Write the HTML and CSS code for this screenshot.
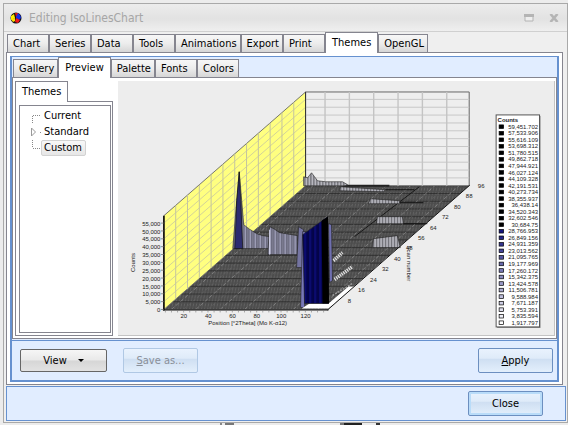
FILE: index.html
```html
<!DOCTYPE html>
<html lang="en">
<head>
    <meta charset="UTF-8">
    <meta name="viewport" content="width=device-width, initial-scale=1.0">
    <title>Editing IsoLinesChart</title>
    <link rel="stylesheet" href="styles.css">
</head>
<body>
    <div class="window">
        <header class="titlebar">
            <svg class="logo" width="12" height="12" viewBox="0 0 12 12">
                <circle cx="6" cy="6" r="5.5" fill="#111"/>
                <path d="M6 6V1A5 5 0 0 1 11 6L9 8Z" fill="#1230e8"/>
                <path d="M5 6L1 8V4L4 2Z" fill="#ffee00"/>
                <path d="M5 6L1 7L3 10L5 9Z" fill="#ffe000"/>
                <path d="M6 6L10 8L8 11L5 10Z" fill="#f01818"/>
                <path d="M5 1L8 1L6 5Z" fill="#e01010"/>
            </svg>
            <h1>Editing IsoLinesChart</h1>
            <button class="win-btn" aria-label="Maximize">
                <svg width="10" height="8" viewBox="0 0 10 8"><path d="M1 1H9V7H1Z" fill="#eee" stroke="#b4b4b4"/><path d="M0 1.5H10" stroke="#b4b4b4" stroke-width="3"/></svg>
            </button>
            <button class="win-btn" aria-label="Close window">
                <svg width="10" height="8" viewBox="0 0 10 8"><path d="M1.5 0L8.5 8M8.5 0L1.5 8" stroke="#b4b4b4" stroke-width="2.6"/></svg>
            </button>
        </header>

        <div class="content">
            <!-- Main tabs -->
            <nav class="tabs">
                <button class="tab">Chart</button>
                <button class="tab">Series</button>
                <button class="tab">Data</button>
                <button class="tab">Tools</button>
                <button class="tab">Animations</button>
                <button class="tab">Export</button>
                <button class="tab">Print</button>
                <button class="tab active">Themes</button>
                <button class="tab">OpenGL</button>
            </nav>

            <div class="page">
                <div class="pane">
                    <!-- Theme tabs -->
                    <nav class="tabs sub">
                        <button class="tab">Gallery</button>
                        <button class="tab active">Preview</button>
                        <button class="tab">Palette</button>
                        <button class="tab">Fonts</button>
                        <button class="tab">Colors</button>
                    </nav>

                    <div class="preview">
                        <div class="sidebar">
                            <nav class="tabs side"><button class="tab active">Themes</button></nav>
                            <div class="side-page">
                                <ul class="tree">
                                    <li><svg width="10" height="16" viewBox="0 0 10 16"><path class="dots" d="M1.500 15V8M2 7.500H10"/></svg><span>Current</span></li>
                                    <li><svg width="10" height="16" viewBox="0 0 10 16"><path d="M.5 4V12L4.500 8Z" fill="#fff" stroke="#999"/><path class="dots" d="M9 8.500H10"/></svg><span>Standard</span></li>
                                    <li><svg width="10" height="16" viewBox="0 0 10 16"><path class="dots" d="M1.500 0V8M2 8.500H10"/></svg><span class="selected">Custom</span></li>
                                </ul>
                            </div>
                        </div>
                        <div class="chart">
                            <svg id="chart" viewBox="118 81 437 255"></svg>
                        </div>
                    </div>

                    <div class="actions">
                        <button class="btn view">View <i class="arrow"></i></button>
                        <button class="btn save" disabled><span><u>S</u>ave as...</span></button>
                        <button class="btn apply"><span><u>A</u>pply</span></button>
                    </div>
                </div>
            </div>

            <footer class="bottom">
                <button class="btn close">Close</button>
            </footer>
        </div>
    </div>
    <div class="behind"></div>
    <script src="chart.js"></script>
</body>
</html>
```
FILE: styles.css
```css
* {
    box-sizing: border-box;
}
body {
    margin: 0;
    padding: 3px 0 0 3px;
    background-color: #ececec;
    font-family: "DejaVu Sans Condensed", "DejaVu Sans", sans-serif;
    font-size: 11px;
    line-height: 16px;
    color: #000;
    overflow: hidden;
}
button {
    font: inherit;
    color: inherit;
    margin: 0;
}
.window {
    border: 1px solid #a9a9a9;
    background-color: #efefef;
}
.titlebar {
    display: flex;
    align-items: center;
    height: 28px;
    padding: 0 8px 0 6px;
    background: linear-gradient(#ececec, #e2e2e2 55%, #efefef);
    border-bottom: 1px solid #d0d0d0;
}
.titlebar h1 {
    flex: 1;
    margin: 0 0 0 7px;
    font-size: 12px;
    font-weight: normal;
    color: #a6a6a6;
}
.win-btn {
    display: flex;
    padding: 0;
    margin-left: 15px;
    border: none;
    background: none;
}
.content {
    padding: 0 1px 1px 2px;
}

/* Tabs */
.tabs {
    display: flex;
    align-items: flex-end;
    height: 20px;
    padding-left: 1px;
}
.tab {
    min-width: 42px;
    height: 18px;
    padding: 0 3px 0 5px;
    border: 1px solid #85858f;
    border-bottom: none;
    background: linear-gradient(#f7f7f7, #ececec 50%, #d6d6d6);
    text-align: left;
    line-height: 18px;
    white-space: nowrap;
}
.tab.active {
    position: relative;
    height: 21px;
    margin-bottom: -1px;
    padding: 0 6px;
    background: #fff;
}
.page {
    margin-right: 3px;
    padding: 3px 3px 2px;
    border: 1px solid #85858f;
    background-color: #fff;
}
.pane {
    border: 1px solid #6691cf;
    border-width: 1px 2px 2px;
    background-color: #e1edff;
}

/* Preview page */
.preview {
    display: flex;
    gap: 5px;
    padding: 3px 1px 2px 2px;
    border: 1px solid #85858f;
    background-color: #fff;
}
.sidebar {
    display: flex;
    flex-direction: column;
    flex: none;
    width: 98px;
}
.tabs.side {
    padding-left: 0;
}
.side .tab {
    width: 53px;
}
.side-page {
    flex: 1;
    display: flex;
    padding: 3px 1px 2px 3px;
    border: 1px solid #85858f;
}
.tree {
    flex: 1;
    margin: 0;
    padding: 2px 0 0 11px;
    border: 1px solid #85858f;
    list-style: none;
}
.tree li {
    display: flex;
    height: 16px;
}
.tree span {
    padding: 0 3px 0 2px;
    border: 1px solid transparent;
    line-height: 14px;
}
.tree .selected {
    border-color: #d2d2d2;
    border-radius: 2px;
    background: linear-gradient(#f8f8f8, #e6e6e6);
}
.dots {
    fill: none;
    stroke: #888;
    stroke-dasharray: 1 1;
}
.chart {
    flex: 1;
    min-width: 0;
    border: 1px solid #c4c4c4;
    border-width: 0 1px 1px 0;
    background-color: #ededed;
}
.chart svg {
    display: block;
    width: 100%;
    font-family: "Liberation Sans", Arial, sans-serif;
    font-size: 6px;
    fill: #222;
}

/* Buttons */
.actions {
    display: flex;
    align-items: center;
    height: 40px;
    margin-top: 1px;
    padding: 0 4px 0 8px;
    border-top: 1px solid #6691cf;
}
.btn {
    width: 75px;
    height: 25px;
    padding: 0;
    border: 1px solid #6c8fc0;
    border-radius: 2px;
    background: linear-gradient(#e9f2fd, #dfebf9 40%, #cfdff2 45%, #e3effc);
}
.btn.view {
    display: flex;
    align-items: center;
    justify-content: center;
    gap: 11px;
    width: 87px;
    height: 23px;
    border-color: #666;
    background: linear-gradient(#f6f6f6, #e9e9e9 48%, #d6d6d6 52%, #e2e2e2);
}
.arrow {
    border: 3px solid transparent;
    border-top-color: #000;
    border-bottom: none;
}
.btn.save {
    margin-left: 16px;
    border-color: #b0c8e4;
    color: #8a8f98;
}
.btn.apply {
    margin-left: auto;
}
.bottom {
    display: flex;
    align-items: center;
    justify-content: flex-end;
    height: 35px;
    margin-top: 1px;
    padding-right: 22px;
    border: 1px solid #6691cf;
    background-color: #e1edff;
}
.btn.close {
    box-shadow: inset 0 0 0 2px #b9dcf9;
}
.behind {
    height: 2px;
    margin: 0 165px 0 217px;
    background: linear-gradient(90deg, #888 0 2px, #ececec 2px 5px, #777 5px 14px, #ececec 14px 120px, #777 120px 124px, #222 124px 142px, #ececec 142px 156px, #333 156px 160px, #ececec 160px);
}
```
FILE: chart.js
```javascript
const chart = document.getElementById("chart");
const DX = 142, DY = -124; // depth of the 3D box
let out = "";

function line(x1, y1, x2, y2, stroke, extra = "") {
    out += `<line x1="${x1}" y1="${y1}" x2="${x2}" y2="${y2}" stroke="${stroke}" ${extra}/>`;
}
function poly(points, fill, extra = "") {
    out += `<polygon points="${points}" fill="${fill}" ${extra}/>`;
}
function text(x, y, value, extra = "") {
    out += `<text x="${x}" y="${y}" ${extra}>${value}</text>`;
}

out += `<defs>
    <pattern id="floor" width="3" height="4" patternUnits="userSpaceOnUse" patternTransform="skewX(-12)">
        <rect width="3" height="4" fill="#4d4d4d"/><rect width="1" height="3" fill="#616161"/>
    </pattern>
    <pattern id="comb" width="3" height="4" patternUnits="userSpaceOnUse">
        <rect width="3" height="4" fill="#606066"/><rect width="1.500" height="4" fill="#d0d0d8"/>
    </pattern>
    <pattern id="comb-blue" width="5" height="4" patternUnits="userSpaceOnUse">
        <rect width="5" height="4" fill="#66667a"/><rect width="1" height="4" fill="#b4b4d0"/><rect x="2.500" width="1" height="4" fill="#8c8ca0"/>
    </pattern>
    <pattern id="block" width="5" height="4" patternUnits="userSpaceOnUse">
        <rect width="5" height="4" fill="#050558"/><rect width="1" height="4" fill="#101080"/><rect x="3" width="1" height="4" fill="#03033a"/>
    </pattern>
    <clipPath id="floor-clip"><polygon points="164,310 328,310 470,186 306,186"/></clipPath>
</defs>`;

// walls
poly("164,310 164,216 306,92 306,186", "#ffff80", 'stroke="#555" stroke-width="0.800"');
poly("306,92 470,92 470,186 306,186", "#eee", 'stroke="#666"');
for (let k = 1; k < 12; k++) {
    const y = 310 - k * 7.87;
    line(164, y, 306, y + DY, "#c8c8a0", 'stroke-width="0.800"');
    line(306, y + DY, 470, y + DY, "#c8c8c8");
    const x = 164 + DX * k / 12, d = DY * k / 12;
    line(x, 216 + d, x, 310 + d, "#c4c4a0");
}
for (let k = 0; k < 6; k++) {
    line(325.5 + k * 24.4, 92, 325.5 + k * 24.4, 186, "#c4c4c4", 'stroke-width="1.400"');
}
line(306, 92, 306, 186, "#333");

// floor
out += '<g clip-path="url(#floor-clip)">';
poly("164,310 328,310 470,186 306,186", "url(#floor)");
for (let k = 0; k < 17; k++) {
    line(164, 186 + k * 7.75, 470, 186 + k * 7.75, "#262626", 'stroke-width="0.700"');
}
for (let k = 0; k < 14; k++) {
    const x = 159.300 + k * 12.2;
    line(x, 310, x + DX, 186, k % 2 ? "#999" : "#666", 'stroke-width="0.600" stroke-dasharray="4 2"');
}
line(355, 237, 420, 187, "#181818");
out += "</g>";

// back ridges
const edge = 'stroke="#222" stroke-width="0.600"';
poly("304,186 304,177 308,178 312,173 315,177 318,181 326,182 343,182 350,186", "url(#comb)", edge);
poly("350,185 390,185 390,187 340,187", "#222");
poly("341,187 386,190 384,192 340,191", "url(#comb)", edge);
poly("371,199 400,201 401,204 369,204", "url(#comb)", edge);
poly("378,217 403,217 404,224 377,224", "url(#comb)", edge);
poly("374,239 398,236 401,248 373,248", "url(#comb)", edge);
line(400, 203, 424, 203, "#111");
line(386, 190, 415, 190, "#111");
line(404, 224, 428, 224, "#111");

// front ridges
poly("233,249 237,201 239.500,172 242,201 244,225 249,229 257,234 263,236 270,237 270,249", "url(#comb-blue)", edge);
poly("235,249 237,201 239.500,172 241,200 243,249", "#2c2c70", 'stroke="#111" stroke-width="0.700"');
poly("268,255 270,227 274,229 280,233 298,236 298,255", "url(#comb-blue)", edge);
line(270, 230, 270, 255, "#d8d8ee");
poly("297,268 299,227 304,230 304,268", "#7474a0", edge);
poly("301,308 303,232 306,232 305,308", "#7777b8", edge);

// small bars on the right
line(334, 261, 343, 253, "#ddd", 'stroke-width="3.500" stroke-dasharray="1.400 0.800"');
line(335, 280, 353, 267, "#ddd", 'stroke-width="3.500" stroke-dasharray="1.400 0.800"');
line(333, 296, 353, 284, "#999", 'stroke-width="1.500" stroke-dasharray="2 1"');

// white base and the tall block
poly("302,309 310,304 329,304 349,287 355,287 329,309", "#fff");
poly("305,304 303,235 328,217 329,304", "url(#block)", edge);
poly("322,221 328.500,217 329.500,304 323,304", "#000");
poly("329,224 332,225 333,281 330,283", "#7070b0", edge);

// axes
line(164, 216, 164, 311, "#000", 'stroke-width="1.500"');
line(163, 310.5, 329, 310.5, "#111", 'stroke-width="1.200"');
line(328, 310.5, 470.5, 185.5, "#111");
for (let k = 0; k < 12; k++) {
    const y = 310 - k * 7.87;
    line(161, y, 164, y, "#666", 'stroke-width="0.700"');
    text(160.5, y + 2.6, k ? k * 5 + ",000" : "0", 'text-anchor="end"');
}
for (let k = 0; k < 6; k++) {
    text(184 + k * 24.4, 319, (k + 1) * 20, 'text-anchor="middle"');
}
for (let k = 0; k < 27; k++) {
    line(165.5 + k * 6.1, 311, 165.5 + k * 6.1, 313, "#777", 'stroke-width="0.600"');
}
for (let k = 1; k <= 12; k++) {
    text(338 + k * 12, 313.5 - k * 10.45, k * 8, 'text-anchor="middle"');
}
text(248, 325.5, "Position [°2Theta] (Mo K-α12)", 'text-anchor="middle"');
text(0, 0, "Counts", 'text-anchor="middle" transform="translate(135.5 263) rotate(-90)"');
text(0, 0, "Scan number", 'transform="translate(407.5 246) rotate(90)"');

// legend
const values = ["59,451.702", "57,533.906", "55,616.109", "53,698.312", "51,780.515", "49,862.718",
    "47,944.921", "46,027.124", "44,109.328", "42,191.531", "40,273.734", "38,355.937", "36,438.14",
    "34,520.343", "32,602.546", "30,684.75", "28,766.953", "26,849.156", "24,931.359", "23,013.562",
    "21,095.765", "19,177.969", "17,260.172", "15,342.375", "13,424.578", "11,506.781", "9,588.984",
    "7,671.187", "5,753.391", "3,835.594", "1,917.797"];
out += '<rect x="498" y="116" width="43.500" height="212.500" fill="#888"/>';
out += '<rect x="497" y="115" width="43.500" height="212.500" fill="#fff" stroke="#555"/>';
text(498.5, 121.7, "Counts", 'font-weight="bold"');
values.forEach((value, i) => {
    const y = 126.8 + i * 6.55;
    const t = Math.max(0, i - 16) / 14;
    const c = Math.round(20 + t * 235);
    const fill = i < 16 ? "#000" : `rgb(${c},${c},${Math.round(125 + t * 130)})`;
    out += `<rect x="500" y="${y - 1.8}" width="4.500" height="3.600" fill="${fill}" stroke="#000" stroke-width="0.700"/>`;
    text(539, y + 2.1, value, 'text-anchor="end"');
});

chart.innerHTML = out;
```
